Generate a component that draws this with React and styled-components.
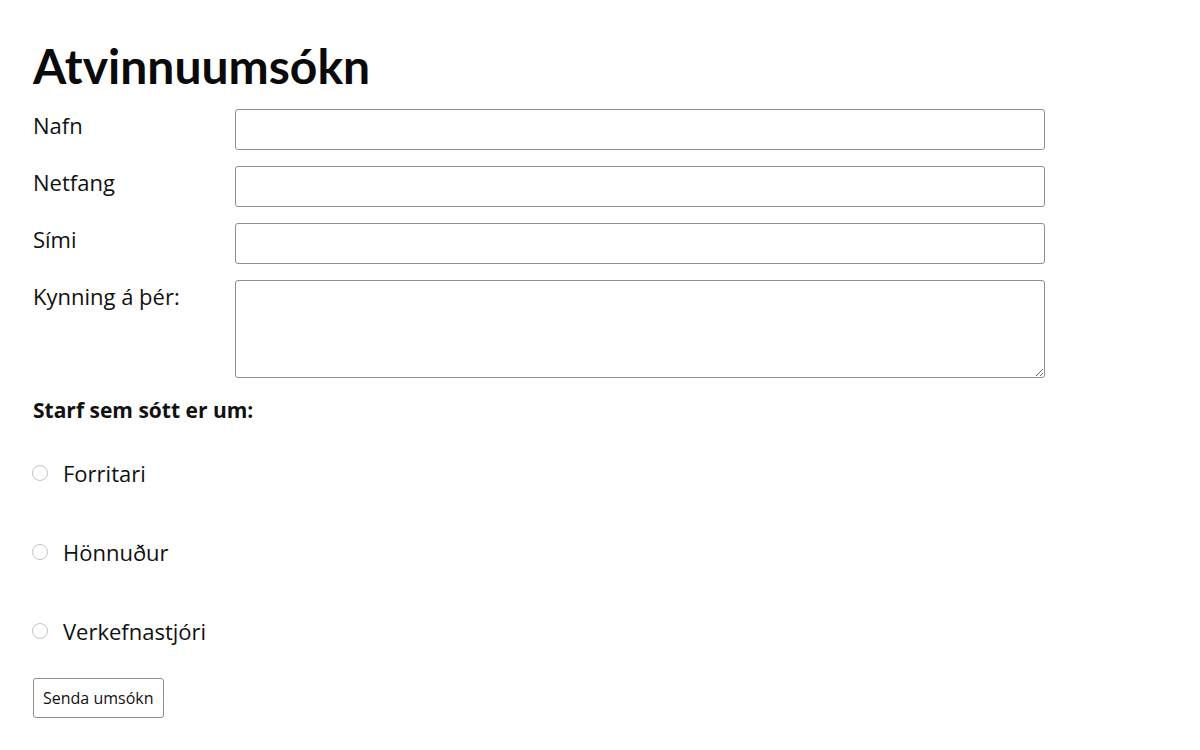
import styled, { createGlobalStyle } from "styled-components";

const Global = createGlobalStyle`
  body {
    margin: 0;
    background: #fff;
    color: #111;
    font-family: "Open Sans", "Noto Sans", sans-serif;
  }
`;

const Page = styled.form`
  padding: 32px 33px;
  width: 1012px;
`;

const Title = styled.h1`
  font-family: Lato, "Open Sans", sans-serif;
  font-weight: 700;
  font-size: 48px;
  line-height: 1;
  margin: 10px 0 19px;
  color: #0a0a0a;
`;

const Row = styled.div`
  display: grid;
  grid-template-columns: 202px 810px;
  align-items: start;
  margin-bottom: 16px;
`;

const Label = styled.label`
  font-size: 22px;
  line-height: 32px;
  margin-top: 0;
`;

const Input = styled.input`
  box-sizing: border-box;
  height: 41px;
  width: 100%;
  border: 1px solid #8f8f8f;
  border-radius: 3px;
  font: inherit;
  margin: 0;
`;

const Area = styled.textarea`
  box-sizing: border-box;
  height: 98px;
  width: 100%;
  border: 1px solid #8f8f8f;
  border-radius: 3px;
  font: inherit;
  margin: 0;
`;

const Legend = styled.div`
  font-size: 21px;
  font-weight: 700;
  margin: 18px 0 0;
  line-height: 28px;
`;

const Choice = styled.label`
  display: flex;
  align-items: center;
  gap: 15px;
  font-size: 22px;
  height: 79px;
  margin-top: ${(p) => (p.first ? "9px" : "0")};
`;

const Radio = styled.span`
  width: 14px;
  height: 14px;
  border-radius: 50%;
  border: 1px solid #c4c4c4;
  margin-left: -1px;
  margin-top: 1px;
`;

const Button = styled.button`
  font-family: "Open Sans", sans-serif;
  font-size: 16px;
  background: #fff;
  color: #111;
  border: 1px solid #8f8f8f;
  border-radius: 3px;
  height: 40px;
  padding: 0 9px;
  margin-top: 8px;
`;

const fields = [
  { label: "Nafn" },
  { label: "Netfang" },
  { label: "Sími" },
  { label: "Kynning á þér:", area: true },
];

const jobs = ["Forritari", "Hönnuður", "Verkefnastjóri"];

export default function App() {
  return (
    <>
      <Global />
      <Page onSubmit={(e) => e.preventDefault()}>
        <Title>Atvinnuumsókn</Title>
        {fields.map((f) => (
          <Row key={f.label}>
            <Label>{f.label}</Label>
            {f.area ? <Area /> : <Input />}
          </Row>
        ))}
        <Legend>Starf sem sótt er um:</Legend>
        {jobs.map((j, i) => (
          <Choice key={j} first={i === 0}>
            <Radio />
            {j}
          </Choice>
        ))}
        <Button type="submit">Senda umsókn</Button>
      </Page>
    </>
  );
}
